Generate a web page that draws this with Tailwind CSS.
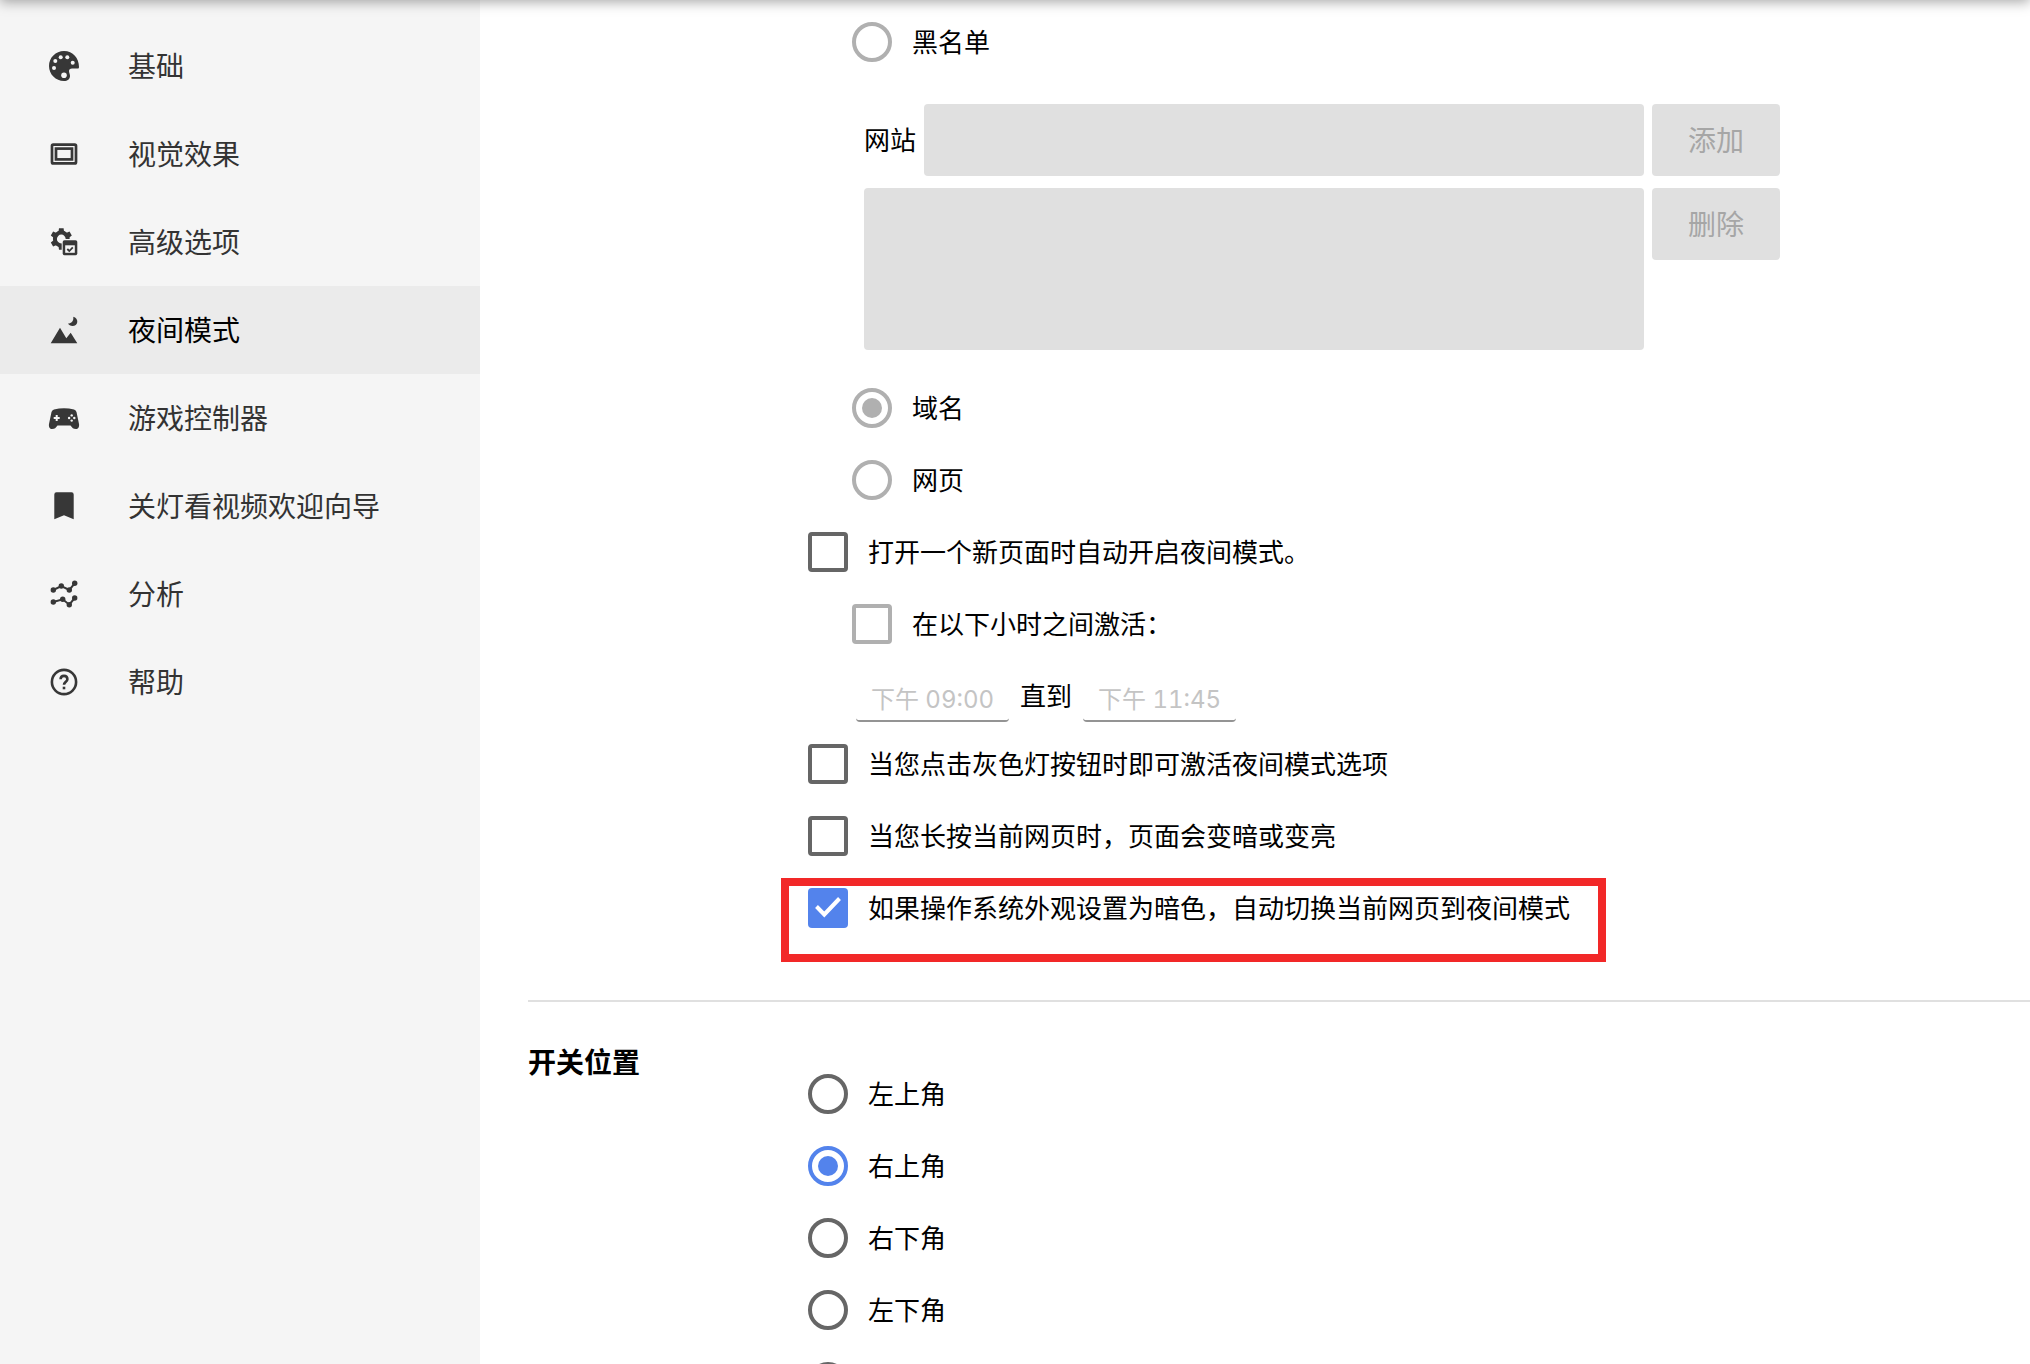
<!DOCTYPE html>
<html lang="zh-CN">
<head>
<meta charset="utf-8">
<meta name="viewport" content="width=device-width, initial-scale=1">
<title>夜间模式</title>
<script src="https://cdn.jsdelivr.net/npm/@tailwindcss/browser@4"></script>
</head>
<body class="flex h-screen overflow-hidden bg-white font-['Inter','Noto_Sans_CJK_SC',sans-serif] text-[26px] leading-10 text-black">

<!-- Toolbar scrolled out of view; only its shadow shows -->
<div class="fixed inset-x-0 -top-14 z-10 h-14 bg-white shadow-[0_2px_12px_rgba(0,0,0,0.35)]"></div>

<aside class="w-[480px] shrink-0 bg-[#f5f5f5] pt-[22px]">
  <nav class="text-[28px] text-[#333] [&_span]:pt-0.5">
    <a href="#basic" class="flex h-[88px] items-center gap-12 px-12">
      <svg class="size-8 shrink-0" viewBox="0 0 32 32" fill="#373737" aria-hidden="true"><path fill-rule="evenodd" d="M31 17C31 8 25 1 16 1C7.700 1 1 7.700 1 16S7.700 31 16 31C19.500 31 22 29 22 26C22 24 21 23 21 21C21 19.500 22 18.500 24 18.500H30Q31 18.500 31 17Z"/><g fill="#f5f5f5"><circle cx="6" cy="18" r="2"/><circle cx="7.300" cy="11" r="2"/><circle cx="12.700" cy="7.300" r="2"/><circle cx="19.300" cy="7.300" r="2"/><circle cx="24.700" cy="12.700" r="2"/><circle cx="16" cy="25.300" r="2.800"/></g></svg>
      <span>基础</span>
    </a>
    <a href="#visual" class="flex h-[88px] items-center gap-12 px-12">
      <svg class="size-8 shrink-0" viewBox="0 0 32 32" fill="none" stroke="#373737" aria-hidden="true"><rect x="4" y="6.600" width="24" height="18.800" rx="1.200" stroke-width="2.700"/><rect x="8" y="10.600" width="16" height="10.800" stroke-width="2.700"/></svg>
      <span>视觉效果</span>
    </a>
    <a href="#advanced" class="flex h-[88px] items-center gap-12 px-12">
      <svg class="size-8 shrink-0" viewBox="0 0 32 32" fill="#373737" aria-hidden="true">
        <circle cx="13.300" cy="13" r="6.400" fill="none" stroke="#373737" stroke-width="4"/>
        <path d="M10.400 6.500L11 2.200H15.600L16.200 6.500Z"/>
        <path d="M10.400 6.500L11 2.200H15.600L16.200 6.500Z" transform="rotate(60 13.300 13)"/>
        <path d="M10.400 6.500L11 2.200H15.600L16.200 6.500Z" transform="rotate(180 13.300 13)"/>
        <path d="M10.400 6.500L11 2.200H15.600L16.200 6.500Z" transform="rotate(240 13.300 13)"/>
        <path d="M10.400 6.500L11 2.200H15.600L16.200 6.500Z" transform="rotate(300 13.300 13)"/>
        <rect x="13.700" y="13" width="17" height="17.500" rx="2.500" fill="#f5f5f5"/>
        <rect x="14.700" y="14.300" width="14.600" height="15" rx="1.800"/>
        <rect x="17.200" y="19.300" width="9.600" height="7.500" fill="#f5f5f5"/>
        <path d="M19.300 23L21.300 25L24.800 21.300" fill="none" stroke="#373737" stroke-width="1.800"/>
      </svg>
      <span>高级选项</span>
    </a>
    <a href="#night" aria-current="page" class="flex h-[88px] items-center gap-12 bg-[#ebebeb] px-12 text-black">
      <svg class="size-8 shrink-0" viewBox="0 0 32 32" fill="#373737" aria-hidden="true"><path d="M2.700 29.300L12 13.700L18.300 24.300L22.700 18.700L29.300 29.300Z"/><path d="M25.300 2.700C28 3.500 29.500 5.700 29.300 8C29 10.500 27 12 24.500 12C22.500 12 20.800 11 20 9.500C23.500 9.500 25.800 7 25.300 2.700Z"/></svg>
      <span>夜间模式</span>
    </a>
    <a href="#gamepad" class="flex h-[88px] items-center gap-12 px-12">
      <svg class="size-8 shrink-0" viewBox="0 0 32 32" fill="#373737" aria-hidden="true"><path d="M6 7.500Q16 5 26 7.500Q28 8 28.500 10L31 22C31.500 25 30 27 28 27C25 27 24.500 26 22.500 23.500H9.500C7.500 26 7 27 4 27C2 27 .5 25 1 22L3.500 10Q4 8 6 7.500Z"/><g fill="#f5f5f5"><path d="M7.700 13H9.700V15H11.700V17H9.700V19H7.700V17H5.700V15H7.700Z"/><circle cx="23.700" cy="13.400" r="1.200"/><circle cx="23.700" cy="18.600" r="1.200"/><circle cx="21.100" cy="16" r="1.200"/><circle cx="26.300" cy="16" r="1.200"/></g></svg>
      <span>游戏控制器</span>
    </a>
    <a href="#welcome" class="flex h-[88px] items-center gap-12 px-12">
      <svg class="size-8 shrink-0" viewBox="0 0 32 32" fill="#373737" aria-hidden="true"><path d="M8.500 2.300H23.500Q25.700 2.300 25.700 4.500V29.300L16 25.300L6.300 29.300V4.500Q6.300 2.300 8.500 2.300Z"/></svg>
      <span>关灯看视频欢迎向导</span>
    </a>
    <a href="#analysis" class="flex h-[88px] items-center gap-12 px-12">
      <svg class="size-8 shrink-0" viewBox="0 0 32 32" fill="#373737" aria-hidden="true"><path d="M5.300 12L13.300 8L21.300 12L26.700 5.300M5.300 24L14.700 21.300L21.300 26.700L26.700 20" fill="none" stroke="#373737" stroke-width="2"/><circle cx="5.300" cy="12" r="2.700"/><circle cx="13.300" cy="8" r="2.700"/><circle cx="21.300" cy="12" r="2.700"/><circle cx="26.700" cy="5.300" r="2.700"/><circle cx="5.300" cy="24" r="2.700"/><circle cx="14.700" cy="21.300" r="2.700"/><circle cx="21.300" cy="26.700" r="2.700"/><circle cx="26.700" cy="20" r="2.700"/></svg>
      <span>分析</span>
    </a>
    <a href="#help" class="flex h-[88px] items-center gap-12 px-12">
      <svg class="size-8 shrink-0" viewBox="0 0 32 32" fill="none" stroke="#373737" aria-hidden="true"><circle cx="16" cy="16" r="12.100" stroke-width="2.600"/><path d="M12.600 13.200C12.600 8.700 19.400 8.700 19.400 13.200C19.400 15.500 16 16 16 18.800" stroke-width="2.600"/><path d="M14.700 22H17.300" stroke-width="2.600"/></svg>
      <span>帮助</span>
    </a>
  </nav>
</aside>

<main class="min-w-0 flex-1 overflow-hidden pl-12">

  <section class="flex border-b-2 border-[#e0e0e0] pt-1.5 pb-14">
    <div class="w-[280px] shrink-0"></div>
    <div class="min-w-0 flex-1">
      <label class="ml-11 flex h-[72px] w-fit items-center gap-5">
        <input type="radio" name="list" disabled class="size-10 shrink-0 appearance-none rounded-full border-4 border-[#b0b0b0]">
        <span class="pt-0.5">黑名单</span>
      </label>

      <div class="mt-[26px] mb-[22px] ml-14 flex max-w-[916px] flex-col gap-3">
        <div class="flex items-center gap-2">
          <label for="site" class="shrink-0 pt-0.5">网站</label>
          <input id="site" type="text" disabled class="h-[72px] min-w-0 flex-1 rounded bg-[#e0e0e0] px-4">
          <button type="button" disabled class="h-[72px] w-32 shrink-0 rounded bg-[#e0e0e0] pt-0.5 text-[28px] text-[#a6a6a6]">添加</button>
        </div>
        <div class="flex items-start gap-2">
          <select size="4" disabled aria-label="网站" class="h-[162px] min-w-0 flex-1 appearance-none rounded bg-[#e0e0e0]"></select>
          <button type="button" disabled class="h-[72px] w-32 shrink-0 rounded bg-[#e0e0e0] pt-0.5 text-[28px] text-[#a6a6a6]">删除</button>
        </div>
      </div>

      <label class="ml-11 flex h-[72px] w-fit items-center gap-5">
        <input type="radio" name="scope" checked disabled class="grid size-10 shrink-0 appearance-none place-items-center rounded-full border-4 border-[#b0b0b0] before:size-5 before:rounded-full before:bg-[#b0b0b0]">
        <span class="pt-0.5">域名</span>
      </label>
      <label class="ml-11 flex h-[72px] w-fit items-center gap-5">
        <input type="radio" name="scope" disabled class="size-10 shrink-0 appearance-none rounded-full border-4 border-[#b0b0b0]">
        <span class="pt-0.5">网页</span>
      </label>
      <label class="flex h-[72px] w-fit items-center gap-5">
        <input type="checkbox" class="size-10 shrink-0 appearance-none rounded border-4 border-[#666]">
        <span class="pt-0.5">打开一个新页面时自动开启夜间模式。</span>
      </label>
      <label class="ml-11 flex h-[72px] w-fit items-center gap-5">
        <input type="checkbox" disabled class="size-10 shrink-0 appearance-none rounded border-4 border-[#b0b0b0]">
        <span class="pt-0.5">在以下小时之间激活：</span>
      </label>
      <div class="ml-12 flex h-[68px] items-center gap-[11px]">
        <input type="text" value="下午 09:00" disabled aria-label="开始时间" class="mt-2 h-12 w-[153px] rounded border-b-2 border-[#949494] text-center text-2xl text-[#c4c4c4] tabular-nums">
        <span class="pt-1.5">直到</span>
        <input type="text" value="下午 11:45" disabled aria-label="结束时间" class="mt-2 h-12 w-[153px] rounded border-b-2 border-[#949494] text-center text-2xl text-[#c4c4c4] tabular-nums">
      </div>
      <label class="flex h-[72px] w-fit items-center gap-5">
        <input type="checkbox" class="size-10 shrink-0 appearance-none rounded border-4 border-[#666]">
        <span class="pt-0.5">当您点击灰色灯按钮时即可激活夜间模式选项</span>
      </label>
      <label class="flex h-[72px] w-fit items-center gap-5">
        <input type="checkbox" class="size-10 shrink-0 appearance-none rounded border-4 border-[#666]">
        <span class="pt-0.5">当您长按当前网页时，页面会变暗或变亮</span>
      </label>
      <label class="relative flex h-[72px] w-fit items-center gap-5">
        <span class="grid shrink-0 place-items-center">
          <input type="checkbox" checked class="col-start-1 row-start-1 size-10 appearance-none rounded bg-[#5383ec]">
          <svg class="pointer-events-none col-start-1 row-start-1 size-10" viewBox="0 0 40 40" fill="none" stroke="#fff" stroke-width="4" aria-hidden="true"><path d="M8.500 18.500L16.300 26.500L31.500 10.500"/></svg>
        </span>
        <span class="pt-0.5">如果操作系统外观设置为暗色，自动切换当前网页到夜间模式</span>
        <!-- Red annotation frame -->
        <span class="pointer-events-none absolute top-1.5 -right-9 -bottom-[18px] -left-[27px] border-8 border-[#f22828]"></span>
      </label>
    </div>
  </section>

  <section class="flex">
    <h2 class="w-[280px] shrink-0 pt-[41px] text-[28px] font-bold">开关位置</h2>
    <div class="min-w-0 flex-1 pt-14">
      <label class="flex h-[72px] w-fit items-center gap-5">
        <input type="radio" name="position" class="size-10 shrink-0 appearance-none rounded-full border-4 border-[#666]">
        <span class="pt-0.5">左上角</span>
      </label>
      <label class="flex h-[72px] w-fit items-center gap-5">
        <input type="radio" name="position" checked class="grid size-10 shrink-0 appearance-none place-items-center rounded-full border-4 border-[#5383ec] before:size-5 before:rounded-full before:bg-[#5383ec]">
        <span class="pt-0.5">右上角</span>
      </label>
      <label class="flex h-[72px] w-fit items-center gap-5">
        <input type="radio" name="position" class="size-10 shrink-0 appearance-none rounded-full border-4 border-[#666]">
        <span class="pt-0.5">右下角</span>
      </label>
      <label class="flex h-[72px] w-fit items-center gap-5">
        <input type="radio" name="position" class="size-10 shrink-0 appearance-none rounded-full border-4 border-[#666]">
        <span class="pt-0.5">左下角</span>
      </label>
      <div class="flex h-[72px] items-center">
        <input type="radio" name="position" aria-label="其他位置" class="size-10 shrink-0 appearance-none rounded-full border-4 border-[#666]">
      </div>
    </div>
  </section>
</main>
</body>
</html>
